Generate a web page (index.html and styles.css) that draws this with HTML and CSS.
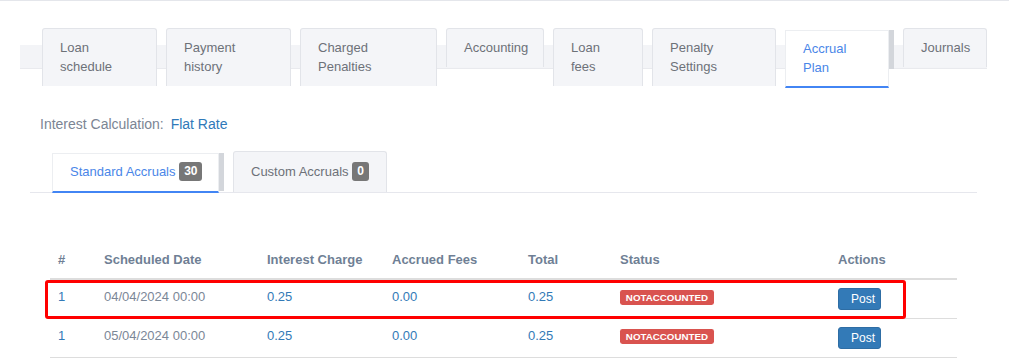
FILE: index.html
```html
<!DOCTYPE html>
<html lang="en">
<head>
    <meta charset="UTF-8">
    <meta name="viewport" content="width=device-width, initial-scale=1.0">
    <title>Accrual Plan</title>
    <link rel="stylesheet" href="styles.css">
</head>
<body>

    <div class="loan-page">

        <!-- loan account tabs -->
        <ul class="loan-tabs">
            <li class="loan-tab tab-schedule">Loan<br>schedule</li>
            <li class="loan-tab tab-payment">Payment<br>history</li>
            <li class="loan-tab tab-charged">Charged<br>Penalties</li>
            <li class="loan-tab tab-accounting">Accounting</li>
            <li class="loan-tab tab-fees">Loan<br>fees</li>
            <li class="loan-tab tab-penalty">Penalty<br>Settings</li>
            <li class="loan-tab tab-accrual active">Accrual<br>Plan</li>
            <li class="loan-tab tab-journals">Journals</li>
        </ul>

        <p class="interest-calc">Interest Calculation: <a href="#" class="interest-value">Flat Rate</a></p>

        <ul class="accrual-tabs">
            <li class="accrual-tab active">Standard Accruals <span class="badge">30</span></li>
            <li class="accrual-tab">Custom Accruals <span class="badge">0</span></li>
        </ul>

        <div class="accrual-table-wrap">
            <table class="accrual-table">
                <colgroup>
                    <col class="col-num">
                    <col class="col-date">
                    <col class="col-interest">
                    <col class="col-fees">
                    <col class="col-total">
                    <col class="col-status">
                    <col class="col-actions">
                </colgroup>
                <thead>
                    <tr>
                        <th>#</th>
                        <th>Scheduled Date</th>
                        <th>Interest Charge</th>
                        <th>Accrued Fees</th>
                        <th>Total</th>
                        <th>Status</th>
                        <th>Actions</th>
                    </tr>
                </thead>
                <tbody>
                    <tr>
                        <td><a href="#">1</a></td>
                        <td class="date">04/04/2024 00:00</td>
                        <td><a href="#">0.25</a></td>
                        <td><a href="#">0.00</a></td>
                        <td><a href="#">0.25</a></td>
                        <td><span class="label-danger">NOTACCOUNTED</span></td>
                        <td><button class="btn-post">Post</button></td>
                    </tr>
                    <tr>
                        <td><a href="#">1</a></td>
                        <td class="date">05/04/2024 00:00</td>
                        <td><a href="#">0.25</a></td>
                        <td><a href="#">0.00</a></td>
                        <td><a href="#">0.25</a></td>
                        <td><span class="label-danger">NOTACCOUNTED</span></td>
                        <td><button class="btn-post">Post</button></td>
                    </tr>
                </tbody>
            </table>

            <!-- red annotation round the first row -->
            <div class="highlight-box"></div>
        </div>

    </div>

</body>
</html>
```

FILE: styles.css
```css
* {
    box-sizing: border-box;
}

body {
    margin: 0;
    background: #fff;
    font-family: "Liberation Sans", Arial, sans-serif;
    font-size: 13px;
    color: #6d7178;
}

a {
    color: #337ab7;
    text-decoration: none;
}

.loan-page {
    border-top: 1px solid #e4e6eb;
}

/* main tabs */
.loan-tabs {
    list-style: none;
    display: flex;
    align-items: flex-start;
    gap: 9px;
    width: 967px;
    margin: 27px 0 0 20px;
    padding: 0 0 0 22px;
    background: linear-gradient(to bottom, #fff 0, #fff 17px, #f3f4f7 17px, #f3f4f7 40px, #e9eaee 40px, #e9eaee 41px, #fff 41px) no-repeat;
}

.loan-tab {
    position: relative;
    flex: 0 0 auto;
    padding: 9px 10px 10px 17px;
    line-height: 19px;
    background: #f4f5f8;
    border: 1px solid #e2e4e9;
    border-bottom: none;
    border-radius: 3px 3px 0 0;
    color: #6d7178;
}

.tab-schedule { width: 115px; }
.tab-payment { width: 125px; }
.tab-charged { width: 137px; }
.tab-accounting { width: 98px; }
.tab-fees { width: 90px; }
.tab-penalty { width: 124px; }
.tab-journals { width: 84px; }

.loan-tab.active {
    width: 104px;
    margin-top: 2px;
    margin-right: 5px;
    padding: 8px 10px 9px 17px;
    background: #fff;
    border: 1px solid #eceef1;
    border-bottom: 2px solid #4285f4;
    border-radius: 0;
    color: #4a86e8;
}

.loan-tab.active::after {
    content: "";
    position: absolute;
    top: -1px;
    right: -6px;
    width: 5px;
    height: 39px;
    background: #d3d6db;
}

/* interest line */
.interest-calc {
    margin: 26px 0 0 40px;
    font-size: 14px;
    line-height: 20px;
    color: #7b8594;
}

.interest-value {
    margin-left: 3px;
    color: #2f79b9;
}

/* accrual sub tabs */
.accrual-tabs {
    list-style: none;
    display: flex;
    align-items: flex-end;
    gap: 9px;
    width: 947px;
    margin: 17px 0 0 30px;
    padding: 0 0 0 22px;
    border-bottom: 1px solid #e6e7ed;
}

.accrual-tab {
    position: relative;
    display: flex;
    align-items: center;
    height: 41px;
    padding: 0 17px 2px 17px;
    background: #f4f5f8;
    border: 1px solid #e2e4e9;
    border-bottom: none;
    border-radius: 3px 3px 0 0;
    color: #6d7178;
    white-space: pre;
}

.accrual-tab.active {
    width: 167px;
    height: 40px;
    margin-right: 5px;
    margin-bottom: -1px;
    padding: 0 17px 2px 17px;
    background: #fff;
    border: 1px solid #eceef1;
    border-bottom: 2px solid #4285f4;
    border-radius: 0;
    color: #4a86e8;
}

.accrual-tab.active::after {
    content: "";
    position: absolute;
    top: -1px;
    right: -6px;
    width: 5px;
    height: 38px;
    background: #d3d6db;
}

.badge {
    display: inline-block;
    padding: 3px 5px 4px;
    font-size: 12px;
    font-weight: bold;
    line-height: 12px;
    color: #fff;
    background: #777;
    border-radius: 3px;
}

/* table */
.accrual-table-wrap {
    position: relative;
    width: 907px;
    margin: 50px 0 0 50px;
}

.accrual-table {
    width: 100%;
    border-collapse: collapse;
    table-layout: fixed;
    font-size: 13px;
}

.col-num { width: 46px; }
.col-date { width: 163px; }
.col-interest { width: 125px; }
.col-fees { width: 136px; }
.col-total { width: 92px; }
.col-status { width: 218px; }
.col-actions { width: 127px; }

.accrual-table th {
    padding: 8px;
    text-align: left;
    line-height: 1.42857;
    font-weight: bold;
    color: #6f7f95;
    border-bottom: 2px solid #ddd;
}

.accrual-table td {
    padding: 8px;
    line-height: 1.42857;
    vertical-align: top;
    border-bottom: 1px solid #ddd;
}

.accrual-table td.date {
    color: #7b8797;
}

.label-danger {
    display: inline;
    padding: .2em .6em .3em;
    font-size: 75%;
    font-weight: bold;
    line-height: 1;
    color: #fff;
    background: #d9534f;
    border-radius: .25em;
    white-space: nowrap;
}

.btn-post {
    display: inline-block;
    padding: 1px 5px 1px 12px;
    font-family: inherit;
    font-size: 12px;
    line-height: 1.5;
    color: #fff;
    background: #337ab7;
    border: 1px solid #2e6da4;
    border-radius: 3px;
    cursor: pointer;
}

.highlight-box {
    position: absolute;
    left: -5px;
    top: 36.5px;
    width: 861px;
    height: 39px;
    border: 3px solid #f00;
    border-radius: 3px;
    pointer-events: none;
}
```
